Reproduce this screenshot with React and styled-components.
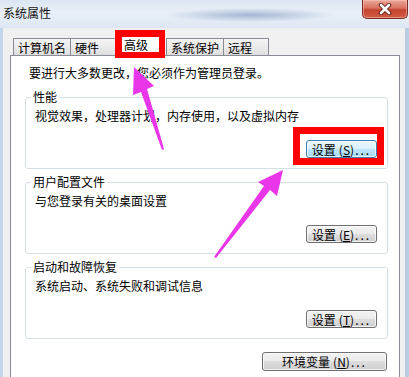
import React from 'react';
import styled, { createGlobalStyle } from 'styled-components';

const GlobalStyle = createGlobalStyle`
  html, body {
    margin: 0;
    padding: 0;
    background: #f0f0f0;
  }
  body {
    font-family: "Noto Sans CJK SC", "Liberation Sans", sans-serif;
    font-size: 12px;
    color: #000;
  }
`;

// Ventana
const Window = styled('div')`
  position: relative;
  width: 409px;
  height: 377px;
  overflow: hidden;
  display: flex;
  flex-direction: column;
  background: #d6e2f0;
`;

const TitleBar = styled('div')`
  height: 28px;
  flex-shrink: 0;
  display: flex;
  align-items: flex-start;
  justify-content: space-between;
  padding-left: 3px;
  box-sizing: border-box;
  background:
    radial-gradient(ellipse 85px 7px at 250px 15px, rgba(80, 115, 170, 0.45), transparent),
    linear-gradient(180deg, #dbe5f1 0%, #e9eff7 45%, #dde7f3 100%);
`;

const Title = styled('span')`
  line-height: 26px;
  font-size: 12px;
  color: #111;
`;

const CloseButton = styled('div')`
  width: 46px;
  height: 19px;
  margin-right: 1px;
  display: flex;
  align-items: center;
  justify-content: center;
  box-sizing: border-box;
  border: 1px solid #7a2c22;
  border-top: none;
  border-radius: 0 0 5px 5px;
  background: linear-gradient(180deg, #e9a99b 0%, #d9705f 45%, #c3422f 55%, #d25c45 100%);
  box-shadow: inset 0 0 0 1px rgba(255, 200, 190, 0.5);
`;

const Frame = styled('div')`
  flex: 1;
  display: flex;
  flex-direction: column;
  min-height: 0;
  padding: 2px 5px 0 7px;
  background: #f0f0f0;
  border-left: 3px solid #c2d5ec;
  border-right: 4px solid #b9cce3;
`;

const TabRow = styled('div')`
  display: flex;
  align-items: flex-end;
  padding-left: 3px;
  height: 25px;
  flex-shrink: 0;
`;

const Tab = styled('div')`
  position: relative;
  box-sizing: border-box;
  height: 17px;
  min-width: 46px;
  padding: 0 4px;
  margin-left: -1px;
  line-height: 17px;
  white-space: nowrap;
  border: 1px solid #898c95;
  border-bottom: none;
  background: linear-gradient(180deg, #f4f4f4 0%, #ebebeb 50%, #dedede 100%);
  &:first-child {
    margin-left: 0;
  }
`;

const ActiveTab = styled('div')`
  position: relative;
  z-index: 2;
  box-sizing: border-box;
  height: 28px;
  width: 50px;
  margin: 0 2px -3px -1px;
  padding: 0 2px;
  border: 7px solid #ff0000;
  border-right-width: 6px;
  border-bottom-width: 6px;
  background: #fff;
  line-height: 15px;
  white-space: nowrap;
`;

const Panel = styled('div')`
  flex: 1;
  display: flex;
  flex-direction: column;
  background: #fff;
  border: 1px solid #898c95;
  border-bottom: none;
  padding: 10px 11px 0 14px;
`;

const Intro = styled('div')`
  line-height: 14px;
  padding-left: 4px;
  white-space: nowrap;
`;

const Groups = styled('div')`
  display: flex;
  flex-direction: column;
  gap: 13px;
  margin-top: 17px;
`;

const Group = styled('div')`
  display: flex;
  flex-direction: column;
  border: 1px solid #d5dfe5;
  border-radius: 3px;
  padding: 0 10px 10px 9px;
`;

const Legend = styled('span')`
  align-self: flex-start;
  margin: -8px 0 0 -4px;
  padding: 0 2px;
  line-height: 14px;
  background: #fff;
`;

const Desc = styled('div')`
  margin-top: 5px;
  line-height: 14px;
  white-space: nowrap;
`;

const ButtonRow = styled('div')`
  display: flex;
  justify-content: flex-end;
  margin-top: ${(p) => p.$top || 17}px;
  padding-right: ${(p) => p.$right || 0}px;
`;

const Highlight = styled('div')`
  display: flex;
  margin: -13px -7px -7px 0;
  padding: 6px 0 0 6px;
  border: 7px solid #ff0000;
  background: #fff;
`;

const Button = styled('div')`
  box-sizing: border-box;
  width: ${(p) => (p.$wide ? 125 : 71)}px;
  height: ${(p) => (p.$wide ? 19 : 18)}px;
  display: flex;
  align-items: center;
  justify-content: center;
  font-size: 12px;
  white-space: nowrap;
  border: 1px solid ${(p) => (p.$focus ? '#3c7fb1' : '#707070')};
  border-radius: 3px;
  background: ${(p) =>
    p.$focus
      ? 'linear-gradient(180deg, #eaf6fd 0%, #d9f0fc 50%, #bee6fd 50%, #a7d9f5 100%)'
      : 'linear-gradient(180deg, #f2f2f2 0%, #ebebeb 50%, #dddddd 50%, #cfcfcf 100%)'};
  box-shadow: inset 0 0 0 1px rgba(255, 255, 255, 0.7);
  u {
    text-decoration: underline;
  }
`;

const Key = styled('span')`
  margin-left: 3px;
`;

const Dots = styled('span')`
  letter-spacing: 2px;
  margin-left: 1px;
`;

const Overlay = styled('svg')`
  position: absolute;
  left: 0;
  top: 0;
  z-index: 5;
  pointer-events: none;
`;

const CloseIcon = () => (
  <svg width="14" height="12" viewBox="0 0 14 12">
    <path d="M3 2 L11 10 M11 2 L3 10" stroke="#5a1a12" strokeWidth="4.4" strokeLinecap="round" />
    <path d="M3 2 L11 10 M11 2 L3 10" stroke="#fff" strokeWidth="2.6" strokeLinecap="round" />
  </svg>
);

const Arrows = () => (
  <Overlay width="409" height="377" viewBox="0 0 409 377">
    <polygon
      fill="#e936e9"
      points="134,67 154,86 147,89 164,149 162,150 141,92 133,95"
    />
    <polygon
      fill="#e936e9"
      points="283,170 277,196 270,190 216,258 214,257 264,186 258,182"
    />
  </Overlay>
);

const Label = ({ text, k }) => (
  <>
    {text}
    <Key>
      (<u>{k}</u>)
    </Key>
    <Dots>...</Dots>
  </>
);

const tabs = ['计算机名', '硬件'];
const tabsAfter = ['系统保护', '远程'];

const groups = [
  { title: '性能', desc: '视觉效果，处理器计划，内存使用，以及虚拟内存', key: 'S', hot: true },
  { title: '用户配置文件', desc: '与您登录有关的桌面设置', key: 'E' },
  { title: '启动和故障恢复', desc: '系统启动、系统失败和调试信息', key: 'T' },
];

const App = () => {
  return (
    <Window>
      <GlobalStyle />
      <TitleBar>
        <Title>系统属性</Title>
        <CloseButton>
          <CloseIcon />
        </CloseButton>
      </TitleBar>
      <Frame>
        <TabRow>
          {tabs.map((t) => (
            <Tab key={t}>{t}</Tab>
          ))}
          <ActiveTab>高级</ActiveTab>
          {tabsAfter.map((t) => (
            <Tab key={t}>{t}</Tab>
          ))}
        </TabRow>
        <Panel>
          <Intro>要进行大多数更改，您必须作为管理员登录。</Intro>
          <Groups>
            {groups.map((g) => (
              <Group key={g.title}>
                <Legend>{g.title}</Legend>
                <Desc>{g.desc}</Desc>
                <ButtonRow>
                  {g.hot ? (
                    <Highlight>
                      <Button $focus>
                        <Label text="设置" k={g.key} />
                      </Button>
                    </Highlight>
                  ) : (
                    <Button>
                      <Label text="设置" k={g.key} />
                    </Button>
                  )}
                </ButtonRow>
              </Group>
            ))}
          </Groups>
          <ButtonRow $top={13} $right={1}>
            <Button $wide>
              <Label text="环境变量" k="N" />
            </Button>
          </ButtonRow>
        </Panel>
      </Frame>
      <Arrows />
    </Window>
  );
};

export default App;
